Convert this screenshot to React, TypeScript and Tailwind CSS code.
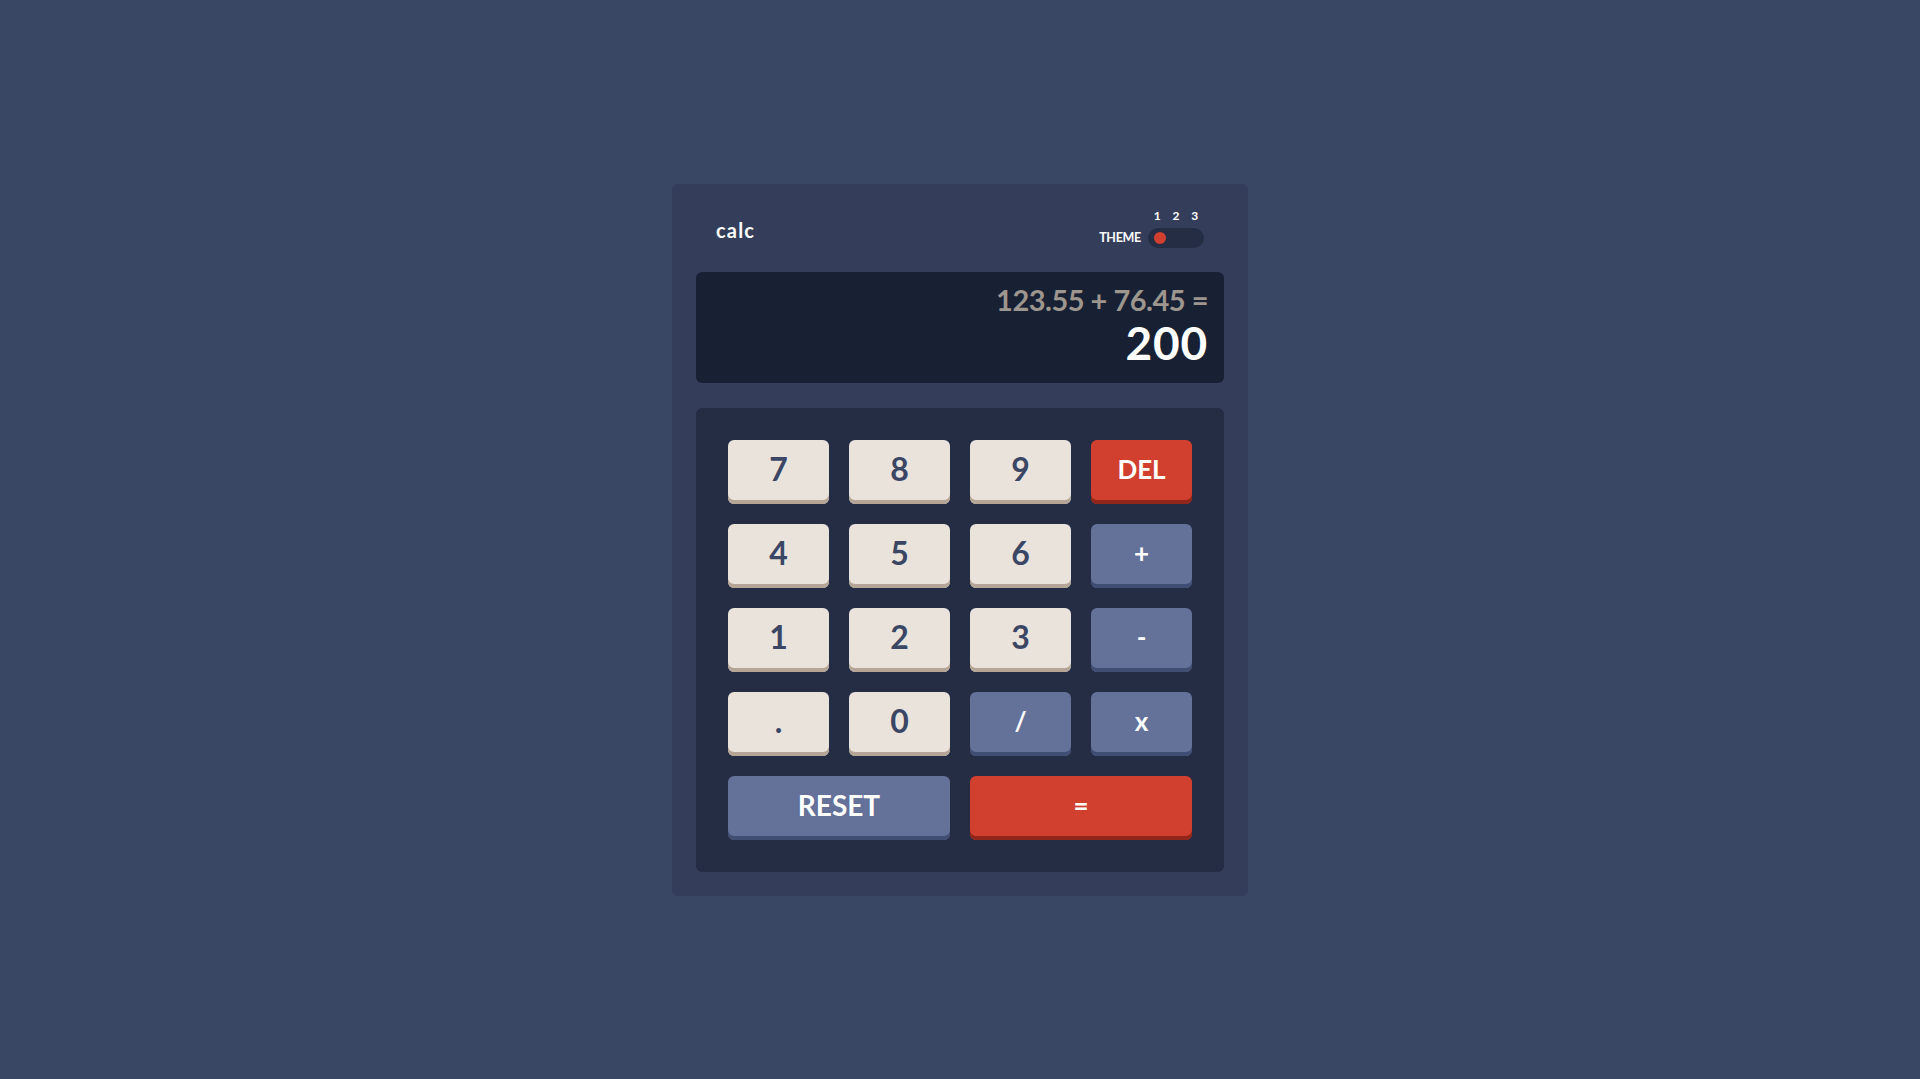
import React from "react";

type KeyKind = "num" | "op" | "red";

const keyStyles: Record<KeyKind, string> = {
  num: "bg-[#eae3dc] text-[#3b4664] shadow-[inset_0_-4px_0_#b4a597] text-[32px]",
  op: "bg-[#647198] text-white shadow-[inset_0_-4px_0_#414e73] text-[26px]",
  red: "bg-[#d13f2f] text-white shadow-[inset_0_-4px_0_#93261a] text-[26px]",
};

function Key({ label, kind = "num", wide = false, size }: { label: string; kind?: KeyKind; wide?: boolean; size?: string }) {
  return (
    <button
      className={`h-16 pb-[6px] rounded-[6px] flex items-center justify-center font-bold leading-none ${keyStyles[kind]} ${wide ? "col-span-2" : ""} ${size ?? ""}`}
    >
      {label}
    </button>
  );
}

export default function App() {
  return (
    <div className="min-h-screen flex items-center justify-center bg-[#3a4764] font-['Lato',sans-serif]">
      <div className="w-[576px] rounded-[6px] bg-[#343e5a] p-6">
        {/* header */}
        <div className="h-10 px-5 flex justify-between items-end">
          <span className="text-white text-[20px] leading-[20px] font-bold mb-[8px] tracking-[1.2px]">calc</span>
          <div className="flex items-end gap-[7px]">
            <span className="text-white text-[12.5px] font-bold leading-[20px] tracking-[-0.3px]">THEME</span>
            <div className="flex flex-col">
              <div className="grid grid-cols-3 text-center text-white text-[12px] font-bold leading-[14px] mb-[6px] translate-y-[1px]">
                <span>1</span>
                <span>2</span>
                <span>3</span>
              </div>
              <div className="w-14 h-5 rounded-full bg-[#242d44] flex items-center px-[6px]">
                <div className="w-3 h-3 rounded-full bg-[#d13f2f]" />
              </div>
            </div>
          </div>
        </div>

        {/* display */}
        <div className="mt-6 h-[111px] rounded-[6px] bg-[#182034] flex flex-col items-end justify-center pr-4 pb-2">
          <span className="text-[#9d968f] text-[29px] font-bold leading-[36px] tracking-[-0.5px]">123.55 + 76.45 =</span>
          <span className="text-white text-[46px] font-bold leading-[44px] mt-[3px] tracking-[0.8px]">200</span>
        </div>

        {/* keypad */}
        <div className="mt-[25px] rounded-[6px] bg-[#252d44] p-8 grid grid-cols-4 gap-5">
          <Key label="7" />
          <Key label="8" />
          <Key label="9" />
          <Key label="DEL" kind="red" />
          <Key label="4" />
          <Key label="5" />
          <Key label="6" />
          <Key label="+" kind="op" size="text-[22px]" />
          <Key label="1" />
          <Key label="2" />
          <Key label="3" />
          <Key label="-" kind="op" />
          <Key label="." />
          <Key label="0" />
          <Key label="/" kind="op" />
          <Key label="x" kind="op" />
          <Key label="RESET" kind="op" wide size="text-[28px]" />
          <Key label="=" kind="red" wide size="text-[22px]" />
        </div>
      </div>
    </div>
  );
}
